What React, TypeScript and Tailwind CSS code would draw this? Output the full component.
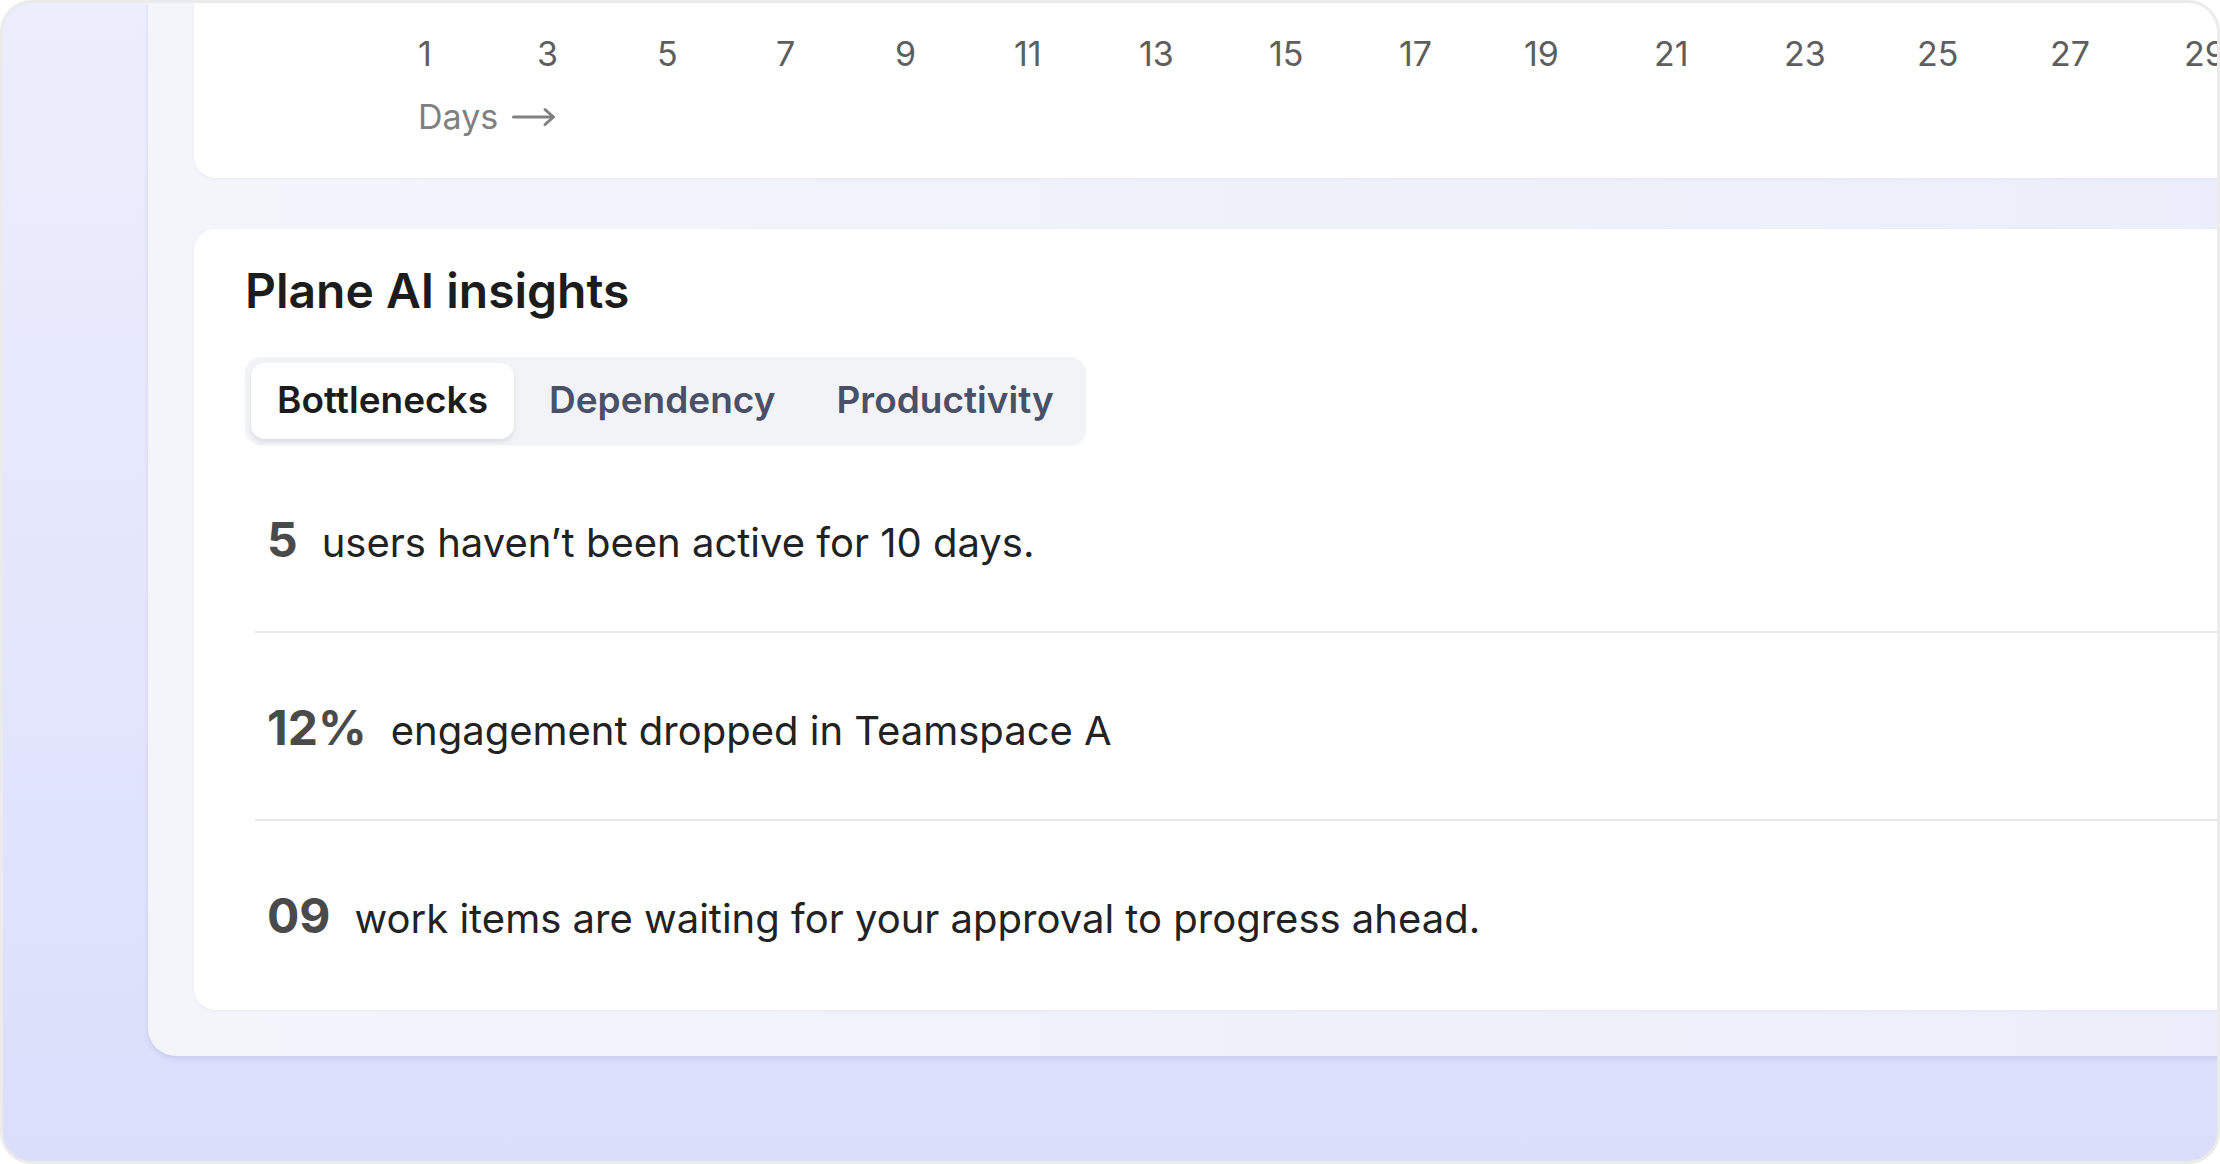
import React from 'react';

const days = [
  { label: '1', w: 'w-[119px]' },
  { label: '3', w: 'w-[120px]' },
  { label: '5', w: 'w-[119px]' },
  { label: '7', w: 'w-[119px]' },
  { label: '9', w: 'w-[119px]' },
  { label: '11', w: 'w-[125px]' },
  { label: '13', w: 'w-[130px]' },
  { label: '15', w: 'w-[130px]' },
  { label: '17', w: 'w-[125px]' },
  { label: '19', w: 'w-[130px]' },
  { label: '21', w: 'w-[130px]' },
  { label: '23', w: 'w-[133px]' },
  { label: '25', w: 'w-[133px]' },
  { label: '27', w: 'w-[134px]' },
  { label: '29', w: 'w-[60px]' },
];

const insights = [
  { value: '5', text: 'users haven’t been active for 10 days.' },
  { value: '12%', text: 'engagement dropped in Teamspace A' },
  { value: '09', text: 'work items are waiting for your approval to progress ahead.' },
];

const tabs = ['Bottlenecks', 'Dependency', 'Productivity'];

function LongArrow() {
  return (
    <svg width="44" height="22" viewBox="0 0 44 22" fill="none" className="shrink-0">
      <path d="M1.5 11H41" stroke="#808080" strokeWidth="3" strokeLinecap="round" />
      <path d="M33 3.5L41.5 11L33 18.5" stroke="#808080" strokeWidth="3" strokeLinecap="round" strokeLinejoin="round" />
    </svg>
  );
}

function ChartAxis() {
  return (
    <div className="bg-white rounded-bl-[22px] pl-[224px] pt-[31px] pb-[41px] shadow-[0_1px_3px_rgba(60,70,140,0.06)]">
      <div className="flex">
        {days.map((d) => (
          <div key={d.label} className={`${d.w} shrink-0 text-[34px] leading-[40px] text-[#5e5e5e]`}>
            {d.label}
          </div>
        ))}
      </div>
      <div className="mt-[23px] flex items-center gap-[14px] text-[34px] leading-[40px] text-[#808080]">
        <span>Days</span>
        <LongArrow />
      </div>
    </div>
  );
}

function Insights() {
  return (
    <div className="mt-[51px] bg-white rounded-l-[22px] pl-[51px] pt-[34px] pb-[3px] shadow-[0_1px_3px_rgba(60,70,140,0.06)]">
      <h2 className="text-[48px] leading-[56px] font-semibold text-[#1c1c1c]">Plane AI insights</h2>

      <div className="mt-[38px] inline-flex items-center gap-[9px] rounded-[16px] bg-[#f1f3f6] p-[6px] shadow-[0_1px_2px_rgba(0,0,0,0.04)]">
        {tabs.map((t, i) => (
          <div
            key={t}
            className={
              i === 0
                ? 'h-[76px] px-[26px] pb-[2px] flex items-center rounded-[14px] bg-white text-[37px] font-semibold text-[#1c1c1c] shadow-[0_3px_4px_rgba(0,0,0,0.09)]'
                : 'h-[76px] px-[26px] pb-[2px] flex items-center rounded-[14px] text-[37px] font-semibold text-[#4a5068]'
            }
          >
            {t}
          </div>
        ))}
      </div>

      <div className="ml-[10px]">
        {insights.map((row, i) => (
          <div
            key={row.value}
            className={`pl-[12px] pt-[3px] flex items-center ${i > 0 ? 'h-[188px] border-t-2 border-[#e8e8e8]' : 'h-[186px]'}`}
          >
            <div className="flex items-baseline gap-6">
              <span className="text-[48px] font-bold text-[#4a4a4a]">{row.value}</span>
              <span className="text-[40px] text-[#222222]">{row.text}</span>
            </div>
          </div>
        ))}
      </div>
    </div>
  );
}

export default function App() {
  return (
    <div className="w-[2220px] h-[1164px] bg-white" style={{ fontFamily: 'Inter, "Noto Sans", sans-serif' }}>
      <div className="h-full rounded-[32px] border-[3px] border-[#ebebeb] overflow-hidden bg-gradient-to-b from-[#eceefc] via-[#e4e7fc] to-[#dadefb]">
        <div className="ml-[145px] w-[2200px] rounded-bl-[28px] bg-gradient-to-r from-[#f4f5fb] to-[#ebeefa] pl-[46px] pb-[46px] shadow-[0_3px_5px_rgba(90,100,170,0.14)]">
          <ChartAxis />
          <Insights />
        </div>
      </div>
    </div>
  );
}
